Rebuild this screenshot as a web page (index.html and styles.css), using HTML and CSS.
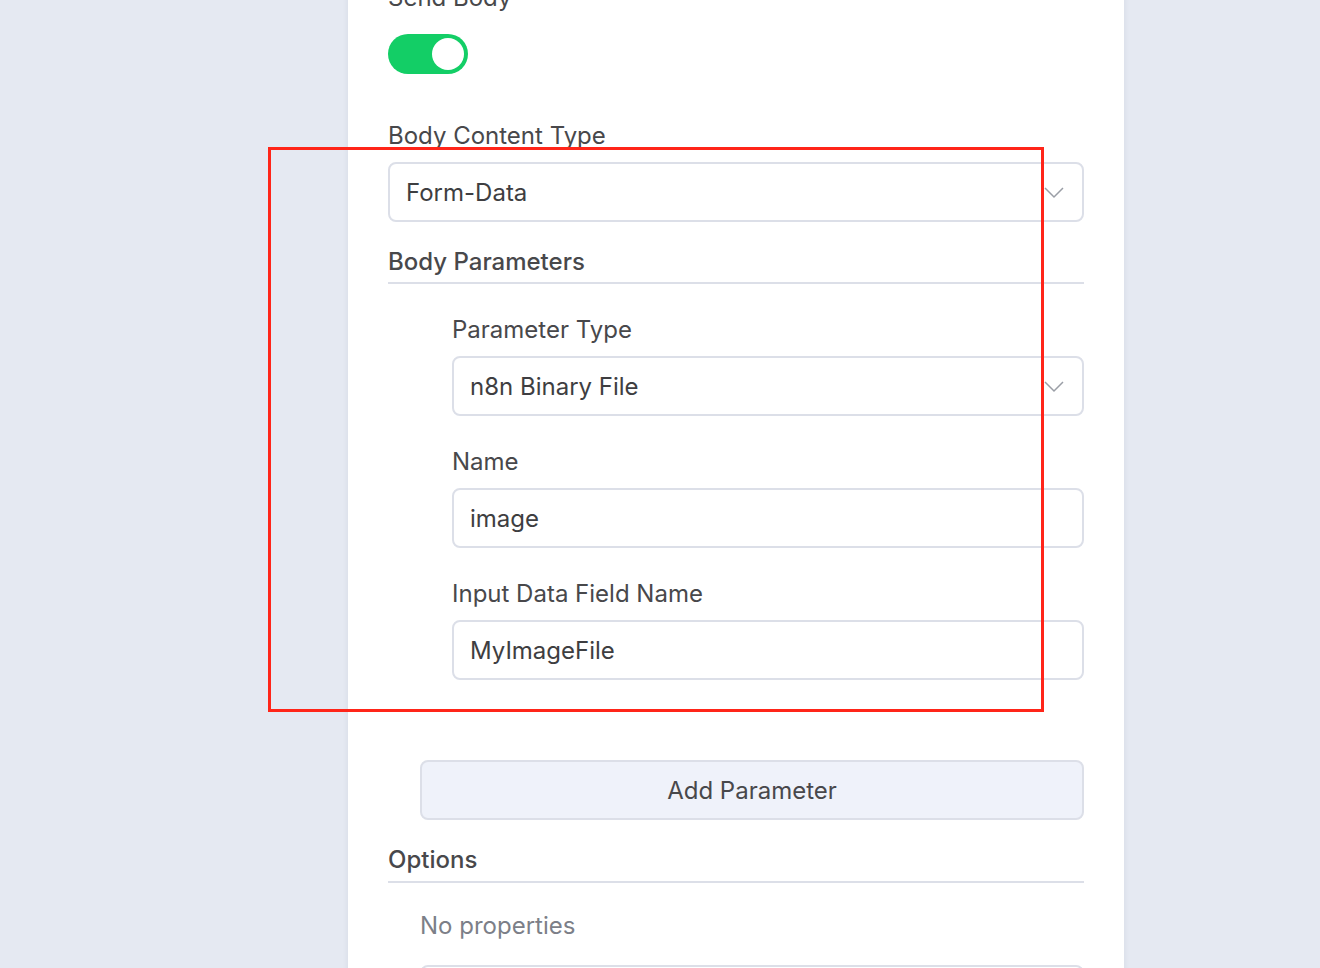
FILE: index.html
```html
<!DOCTYPE html>
<html lang="en">
<head>
  <meta charset="UTF-8" />
  <meta name="viewport" content="width=device-width, initial-scale=1.0" />
  <title>HTTP Request - Body</title>
  <link rel="stylesheet" href="styles.css">
</head>
<body>
  <div class="panel">
    <div class="field">
      <label class="label">Send Body</label>
      <div class="switch on"><span class="knob"></span></div>
    </div>

    <div class="field gap-lg">
      <label class="label">Body Content Type</label>
      <div class="select">
        <span>Form-Data</span>
        <svg class="chevron" width="20" height="12" viewBox="0 0 20 12"><polyline points="1,1 10,10 19,1" fill="none" stroke="#9a9ea6" stroke-width="1.5"/></svg>
      </div>
    </div>

    <div class="section-title">Body Parameters</div>

    <div class="params">
      <div class="field">
        <label class="label">Parameter Type</label>
        <div class="select">
          <span>n8n Binary File</span>
          <svg class="chevron" width="20" height="12" viewBox="0 0 20 12"><polyline points="1,1 10,10 19,1" fill="none" stroke="#9a9ea6" stroke-width="1.5"/></svg>
        </div>
      </div>
      <div class="field">
        <label class="label">Name</label>
        <div class="input">image</div>
      </div>
      <div class="field">
        <label class="label">Input Data Field Name</label>
        <div class="input">MyImageFile</div>
      </div>
    </div>

    <button class="add-btn">Add Parameter</button>

    <div class="section-title options">Options</div>
    <div class="empty">No properties</div>
    <div class="add-btn next"></div>
  </div>

  <div class="highlight"></div>
</body>
</html>
```

FILE: styles.css
```css
body {
  margin: 0;
  background: #e5e9f2;
  font-family: Inter, "Noto Sans", sans-serif;
  color: #48484b;
  height: 968px;
  overflow: hidden;
}
.panel {
  width: 696px;
  margin-left: 348px;
  padding: 0 40px;
  margin-top: -16px;
  background: #fff;
  box-shadow: 0 0 6px rgba(40, 50, 80, 0.08);
}
.label {
  display: block;
  font-size: 24px;
  line-height: 28px;
  margin-bottom: 12px;
}
.field {
  margin-bottom: 32px;
}
.field.gap-lg {
  margin-top: 48px;
  margin-bottom: 26px;
}
.switch {
  width: 80px;
  height: 40px;
  border-radius: 20px;
  background: #13ce66;
  margin-top: 22px;
  position: relative;
}
.switch .knob {
  position: absolute;
  top: 4px;
  right: 4px;
  width: 32px;
  height: 32px;
  border-radius: 50%;
  background: #fff;
}
.select,
.input {
  height: 56px;
  border: 2px solid #dcdfe8;
  border-radius: 8px;
  padding: 0 18px 0 16px;
  display: flex;
  align-items: center;
  justify-content: space-between;
  font-size: 24px;
  color: #3e3e41;
}
.chevron {
  margin-top: 2px;
}
.section-title {
  font-size: 24px;
  font-weight: 500;
  line-height: 28px;
  padding-bottom: 6px;
  border-bottom: 2px solid #dcdfe8;
  margin-bottom: 32px;
}
.section-title.options {
  padding-bottom: 7px;
}
.params {
  padding-left: 64px;
}
.params .field:last-child {
  margin-bottom: 80px;
}
.add-btn {
  display: block;
  box-sizing: border-box;
  width: 664px;
  height: 60px;
  margin-left: 32px;
  border: 2px solid #dcdfe8;
  border-radius: 8px;
  background: #eff2fa;
  font-family: inherit;
  font-size: 24px;
  color: #48484b;
  margin-bottom: 26px;
}
.add-btn.next {
  background: #fff;
}
.empty {
  margin-top: -3px;
  padding-left: 32px;
  font-size: 24px;
  line-height: 28px;
  color: #7c7f88;
  margin-bottom: 25px;
}
.highlight {
  position: absolute;
  left: 268px;
  top: 147px;
  width: 770px;
  height: 559px;
  border: 3px solid #ff2519;
}
```
